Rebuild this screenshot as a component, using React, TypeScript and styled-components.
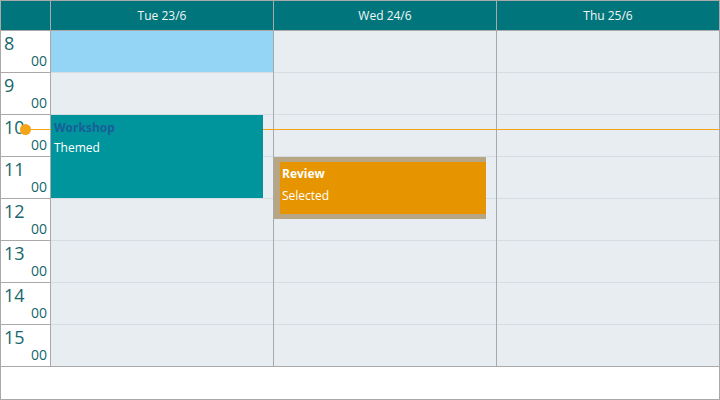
import React from "react";
import styled, { createGlobalStyle } from "styled-components";

const Global = createGlobalStyle`
  html, body { margin: 0; padding: 0; background: #fff; }
  body { font-family: "Open Sans", "Noto Sans", sans-serif; }
  * { box-sizing: border-box; }
`;

const Frame = styled.div`
  width: 720px;
  height: 400px;
  border: 1px solid #a9a9a9;
  display: flex;
  flex-direction: column;
  background: #fff;
`;

const Header = styled.div`
  display: grid;
  grid-template-columns: 49px repeat(3, 1fr);
  column-gap: 1px;
  background: #a9a9a9;
  height: 30px;
  border-bottom: 1px solid #a9a9a9;
`;

const HeadCell = styled.div`
  background: #00767c;
  color: #f2f7f7;
  font-size: 12px;
  display: flex;
  align-items: center;
  justify-content: center;
  padding-bottom: 1px;
`;

const Body = styled.div`
  position: relative;
  display: grid;
  grid-template-columns: 49px repeat(3, 1fr);
  column-gap: 1px;
  background: #a9a9a9;
  border-bottom: 1px solid #a9a9a9;
`;

const TimeCol = styled.div`
  display: flex;
  flex-direction: column;
  background: #fff;
`;

const TimeSlot = styled.div<{ $last?: boolean }>`
  height: ${(p) => (p.$last ? "41px" : "42px")};
  border-bottom: ${(p) => (p.$last ? "none" : "1px solid #a9a9a9")};
  display: flex;
  flex-direction: column;
  color: #17666b;
  padding: 2px 3px 0 3px;
`;

const Hour = styled.span`
  font-size: 18px;
  line-height: 20px;
`;

const Minutes = styled.span`
  font-size: 14px;
  line-height: 16px;
  align-self: flex-end;
`;

const DayCol = styled.div`
  position: relative;
  display: flex;
  flex-direction: column;
  background: #e8edf1;
`;

const Slot = styled.div<{ $last?: boolean; $highlight?: boolean }>`
  height: ${(p) => (p.$last ? "41px" : "42px")};
  border-bottom: ${(p) => (p.$last ? "none" : "1px solid #d5dde3")};
  background: ${(p) => (p.$highlight ? "#94d5f5" : "transparent")};
`;

const Event = styled.div<{ $top: number; $height: number; $variant: "themed" | "selected" }>`
  position: absolute;
  z-index: 2;
  left: 0;
  width: 212px;
  top: ${(p) => p.$top}px;
  height: ${(p) => p.$height}px;
  background: ${(p) => (p.$variant === "themed" ? "#00959c" : "#e69500")};
  ${(p) =>
    p.$variant === "selected"
      ? "border: 5px solid #b8a584; border-left-width: 6px; border-right: none;"
      : ""}
  padding: ${(p) => (p.$variant === "themed" ? "4px 3px" : "3px 2px")};
  display: flex;
  flex-direction: column;
  gap: ${(p) => (p.$variant === "themed" ? "3px" : "5px")};
`;

const EventTitle = styled.div<{ $color: string }>`
  font-weight: 700;
  font-size: 12px;
  line-height: 17px;
  color: ${(p) => p.$color};
`;

const EventText = styled.div`
  font-size: 12px;
  line-height: 17px;
  color: #fff;
`;

const NowLine = styled.div`
  position: absolute;
  z-index: 1;
  left: 25px;
  right: 0;
  top: 98px;
  height: 1px;
  background: #f5a417;
`;

const NowDot = styled.div`
  position: absolute;
  z-index: 1;
  left: 19px;
  top: 93px;
  width: 11px;
  height: 11px;
  border-radius: 50%;
  background: #f5a417;
`;

const Footer = styled.div`
  flex: 1;
  background: #fff;
`;

const hours = [8, 9, 10, 11, 12, 13, 14, 15];
const days = ["Tue 23/6", "Wed 24/6", "Thu 25/6"];

export default function App() {
  return (
    <>
      <Global />
      <Frame>
        <Header>
          <HeadCell />
          {days.map((d) => (
            <HeadCell key={d}>{d}</HeadCell>
          ))}
        </Header>
        <Body>
          <TimeCol>
            {hours.map((h, i) => (
              <TimeSlot key={h} $last={i === hours.length - 1}>
                <Hour>{h}</Hour>
                <Minutes>00</Minutes>
              </TimeSlot>
            ))}
          </TimeCol>
          {days.map((d, di) => (
            <DayCol key={d}>
              {hours.map((h, i) => (
                <Slot key={h} $last={i === hours.length - 1} $highlight={di === 0 && i === 0} />
              ))}
              {di === 0 && (
                <Event $top={84} $height={83} $variant="themed">
                  <EventTitle $color="#1a5e98">Workshop</EventTitle>
                  <EventText>Themed</EventText>
                </Event>
              )}
              {di === 1 && (
                <Event $top={126} $height={62} $variant="selected">
                  <EventTitle $color="#ffffff">Review</EventTitle>
                  <EventText>Selected</EventText>
                </Event>
              )}
            </DayCol>
          ))}
          <NowLine />
          <NowDot />
        </Body>
        <Footer />
      </Frame>
    </>
  );
}
